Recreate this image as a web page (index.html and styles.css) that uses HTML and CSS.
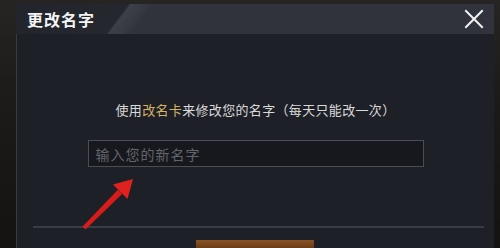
FILE: index.html
```html
<!DOCTYPE html>
<html lang="zh-CN">
<head>
<meta charset="utf-8">
<link rel="stylesheet" href="styles.css">
</head>
<body>
<div class="scene">
  <div class="dialog">
    <div class="header">
      <span class="title">更改名字</span>
      <span class="close">
        <svg width="20" height="20" viewBox="0 0 20 20"><path d="M2 2 L18 18 M18 2 L2 18" stroke="#f2f2f2" stroke-width="2" stroke-linecap="square" fill="none"/></svg>
      </span>
    </div>
    <div class="content">
      <p class="message">使用<span class="gold">改名卡</span>来修改您的名字（每天只能改一次）</p>
      <div class="input"><span class="placeholder">输入您的新名字</span></div>
      <div class="footer">
        <div class="separator"></div>
        <div class="confirm"></div>
      </div>
    </div>
  </div>
</div>
<svg class="arrow" width="500" height="248" viewBox="0 0 500 248">
  <polygon points="82.6,226.6 85.4,229.4 122.1,193.9 117.9,189.7" fill="#d81c1a"/>
  <polygon points="133,179 127.5,199 113,184.5" fill="#e0221e"/>
</svg>
</body>
</html>
```
FILE: styles.css
```css
html, body {
  margin: 0;
  padding: 0;
}
body {
  width: 500px;
  height: 248px;
  overflow: hidden;
  background: linear-gradient(180deg, #262524 0%, #1c1b1a 40%, #141312 100%);
  position: relative;
  font-family: "Noto Sans CJK SC", "Noto Sans", sans-serif;
}
.scene {
  display: flex;
  height: 248px;
  padding: 4px 6px 0 16px;
  box-sizing: border-box;
}
.dialog {
  flex: 1;
  display: flex;
  flex-direction: column;
  overflow: hidden;
}
.header {
  height: 30px;
  flex: none;
  display: flex;
  align-items: center;
  justify-content: space-between;
  padding: 0 10px 0 11px;
  background: linear-gradient(127deg, #22252c 0px, #24272e 90px, #3c4048 92px, #363941 104px, #30333b 110px, #30333b 100%);
}
.title {
  color: #f4f4f4;
  font-size: 16px;
  font-weight: 700;
  letter-spacing: 1px;
  line-height: 20px;
}
.close {
  display: flex;
  width: 20px;
  height: 20px;
}
.content {
  flex: 1;
  display: flex;
  flex-direction: column;
  align-items: center;
  background: #1e2028;
  border-left: 1px solid #363942;
  padding-top: 68px;
}
.message {
  margin: 0;
  color: #dadada;
  font-size: 13px;
  letter-spacing: 0.33px;
  line-height: 16px;
}
.gold {
  color: #d4b264;
}
.input {
  margin-top: 22px;
  width: 336px;
  height: 27px;
  box-sizing: border-box;
  border: 1px solid #4a4d56;
  background: #16181e;
  display: flex;
  align-items: center;
  padding-left: 7px;
}
.placeholder {
  color: #63656c;
  font-size: 14px;
  letter-spacing: 1px;
  line-height: 16px;
}
.footer {
  margin-top: auto;
  align-self: stretch;
  display: flex;
  flex-direction: column;
  align-items: center;
  padding: 0 10px 0 16px;
}
.separator {
  align-self: stretch;
  height: 2px;
  background: #393c45;
}
.confirm {
  margin-top: 12px;
  margin-right: 8px;
  width: 118px;
  height: 8px;
  background: linear-gradient(180deg, #8a5322 0%, #6b3b18 100%);
}
.arrow {
  position: absolute;
  left: 0;
  top: 0;
  pointer-events: none;
}
```
